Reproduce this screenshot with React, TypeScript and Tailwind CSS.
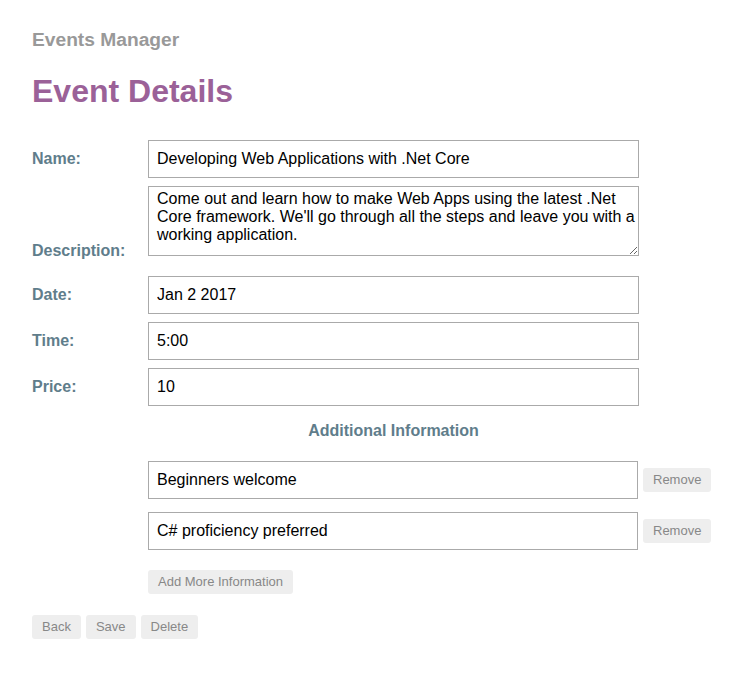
import React, { useState } from 'react';

const labelCls = 'w-[116px] shrink-0 text-[16px] font-bold text-[#607d8b]';
const inputCls =
  'h-[38px] shrink-0 border border-[#aaa] bg-white px-[8px] text-[16px] text-black outline-none';
const btnCls =
  'h-[24px] shrink-0 rounded-[3px] bg-[#eee] px-[10px] text-[13px] leading-[24px] text-[#888]';

export default function App() {
  const [extras, setExtras] = useState<string[]>([
    'Beginners welcome',
    'C# proficiency preferred',
  ]);

  return (
    <div className="min-h-[696px] bg-white px-[32px] pt-[29px] font-['Liberation_Sans',Arial,sans-serif]">
      <div className="text-[19.2px] font-bold leading-[22px] text-[#999]">
        Events Manager
      </div>
      <h1 className="mt-[22px] text-[32px] font-bold leading-[37px] text-[#9b6198]">
        Event Details
      </h1>

      <div className="mt-[30px] flex flex-col">
        <div className="flex items-center">
          <label className={labelCls}>Name:</label>
          <input
            className={`${inputCls} w-[491px]`}
            defaultValue="Developing Web Applications with .Net Core"
          />
        </div>

        <div className="mt-[8px] flex items-end">
          <label className={`${labelCls} mb-[-3px] leading-none`}>
            Description:
          </label>
          <textarea
            className="h-[70px] w-[491px] border border-[#aaa] bg-white pl-[8px] pr-[1px] pt-[3px] text-[16px] leading-[18px] text-black outline-none"
            defaultValue="Come out and learn how to make Web Apps using the latest .Net Core framework. We'll go through all the steps and leave you with a working application."
          />
        </div>

        <div className="mt-[20px] flex items-center">
          <label className={labelCls}>Date:</label>
          <input className={`${inputCls} w-[491px]`} defaultValue="Jan 2 2017" />
        </div>

        <div className="mt-[8px] flex items-center">
          <label className={labelCls}>Time:</label>
          <input className={`${inputCls} w-[491px]`} defaultValue="5:00" />
        </div>

        <div className="mt-[8px] flex items-center">
          <label className={labelCls}>Price:</label>
          <input className={`${inputCls} w-[491px]`} defaultValue="10" />
        </div>
      </div>

      <div className="ml-[116px] mt-[16px] w-[491px] text-center text-[16px] font-bold leading-[18px] text-[#607d8b]">
        Additional Information
      </div>

      <div className="ml-[116px] mt-[21px] flex flex-col gap-[13px]">
        {extras.map((item, i) => (
          <div key={i} className="flex items-center gap-[5px]">
            <input className={`${inputCls} w-[490px]`} defaultValue={item} />
            <button
              className={btnCls}
              onClick={() => setExtras(extras.filter((_, j) => j !== i))}
            >
              Remove
            </button>
          </div>
        ))}
      </div>

      <div className="ml-[116px] mt-[19px]">
        <button className={btnCls} onClick={() => setExtras([...extras, ''])}>
          Add More Information
        </button>
      </div>

      <div className="mt-[21px] flex gap-[5px]">
        <button className={btnCls}>Back</button>
        <button className={btnCls}>Save</button>
        <button className={btnCls}>Delete</button>
      </div>
    </div>
  );
}
